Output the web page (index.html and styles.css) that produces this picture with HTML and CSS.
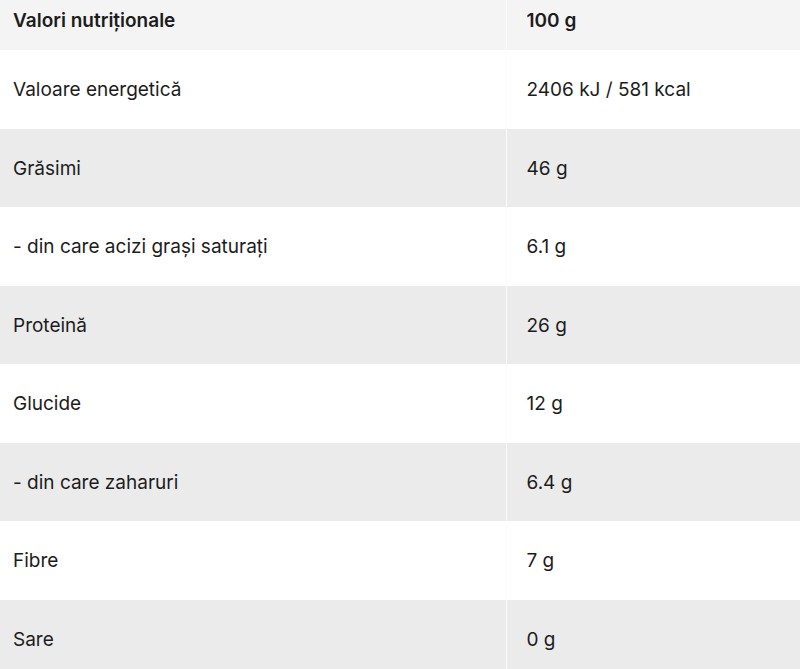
FILE: index.html
```
<!DOCTYPE html>
<html lang="ro">
<head>
<meta charset="utf-8">
<title>Valori nutriționale</title>
<link rel="stylesheet" href="styles.css">
</head>
<body>
<table class="nutri">
  <thead>
    <tr class="head-row">
      <th class="col-name">Valori nutriționale</th>
      <th class="col-val">100 g</th>
    </tr>
  </thead>
  <tbody>
    <tr class="row odd"><td class="col-name">Valoare energetică</td><td class="col-val">2406 kJ / 581 kcal</td></tr>
    <tr class="row even"><td class="col-name">Grăsimi</td><td class="col-val">46 g</td></tr>
    <tr class="row odd"><td class="col-name">- din care acizi grași saturați</td><td class="col-val">6.1 g</td></tr>
    <tr class="row even"><td class="col-name">Proteină</td><td class="col-val">26 g</td></tr>
    <tr class="row odd"><td class="col-name">Glucide</td><td class="col-val">12 g</td></tr>
    <tr class="row even"><td class="col-name">- din care zaharuri</td><td class="col-val">6.4 g</td></tr>
    <tr class="row odd"><td class="col-name">Fibre</td><td class="col-val">7 g</td></tr>
    <tr class="row even"><td class="col-name">Sare</td><td class="col-val">0 g</td></tr>
  </tbody>
</table>
</body>
</html>
```

FILE: styles.css
```
html, body {
  margin: 0;
  padding: 0;
  background: #ffffff;
}

body {
  font-family: Inter, "Noto Sans", "Liberation Sans", sans-serif;
  font-size: 19px;
  color: #1c1c1c;
  overflow: hidden;
}

.nutri {
  width: 800px;
  border-collapse: collapse;
  table-layout: fixed;
}

.col-name {
  width: 506px;
  padding-left: 13px;
  text-align: left;
  box-sizing: border-box;
}

.col-val {
  padding-left: 20px;
  text-align: left;
  border-left: 1px solid #fbfbfb;
}

.head-row th {
  height: 50px;
  background: #f4f4f4;
  font-weight: 600;
  vertical-align: top;
  padding-top: 9px;
  padding-bottom: 0;
  box-sizing: border-box;
  line-height: 24px;
}

.row td {
  height: 78.5px;
  vertical-align: middle;
  padding-top: 2px;
  padding-bottom: 0;
  box-sizing: border-box;
  line-height: 24px;
  font-weight: 400;
}

.row.odd td {
  background: #ffffff;
}

.row.even td {
  background: #ebebeb;
}
```
